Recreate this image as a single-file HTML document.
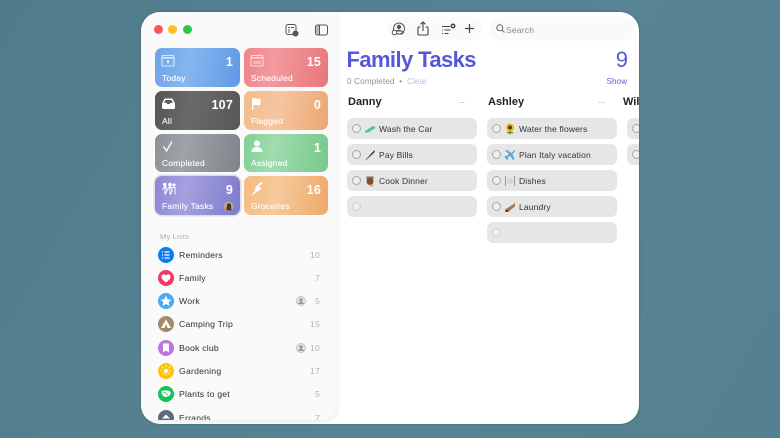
<!DOCTYPE html>
<html><head><meta charset="utf-8">
<style>
*{margin:0;padding:0;box-sizing:border-box}
html,body{width:780px;height:438px;overflow:hidden;background:#56808f;font-family:"Liberation Sans",sans-serif}
.bg{position:absolute;inset:0;background:linear-gradient(120deg,#4f7b8b,#578394 60%,#54808f)}
.win{position:absolute;left:141px;top:12px;width:498px;height:412px;background:#fff;border-radius:19px;overflow:hidden;box-shadow:0 0 2px rgba(0,0,0,.25);filter:blur(.3px)}
.side{position:absolute;left:0;top:0;width:196px;height:408px;background:#fafafa;border-radius:0 0 14px 0;box-shadow:0 1px 6px rgba(0,0,0,.11);overflow:hidden}
.a{position:absolute}
.t{position:absolute;white-space:nowrap}
.tile{position:absolute;width:85px;height:39px;border-radius:7px;color:#fff;font-weight:bold}
.tile .l{position:absolute;left:7px;bottom:4px;font-size:8.5px;font-weight:normal;letter-spacing:.2px;-webkit-text-stroke:.1px #fff;white-space:nowrap}
.tile .n{position:absolute;right:7px;top:6.5px;font-size:12.5px;letter-spacing:.2px}
.tile svg{position:absolute;left:6px;top:6px}
.row{position:absolute;left:0;width:196px;height:23px}
.dot{position:absolute;left:17px;top:2px;width:16px;height:16px;border-radius:50%}
.dot svg{position:absolute;left:0;top:0}
.row .nm{position:absolute;left:38px;top:4.5px;font-size:8.7px;color:#2e2e2e;letter-spacing:.2px;white-space:nowrap}
.row .c{position:absolute;right:17px;top:4.5px;font-size:8.7px;color:#b4b4b4;letter-spacing:.2px}
.pp{position:absolute;left:155px;top:5px;width:10px;height:10px}
.card{position:absolute;width:130px;height:21px;background:#e6e6e6;border-radius:6px}
.card .r{position:absolute;left:5px;top:6px;width:9px;height:9px;border-radius:50%;border:1px solid #a8a8a8;background:#eee}
.card.e .r{border-color:#cfcfcf}
.card .em{position:absolute;left:17px;top:4.5px;width:12px;height:12px}
.card .tx{position:absolute;left:32px;top:5.5px;font-size:8.5px;color:#333;letter-spacing:.15px;white-space:nowrap}
.hd{position:absolute;font-size:11px;font-weight:bold;color:#222;top:84px;white-space:nowrap}
.dots{position:absolute;top:84px;font-size:8px;color:#888;letter-spacing:.1px}
</style></head>
<body>
<div class="bg"></div>
<div class="win">

<div class="side">
<div class="a" style="left:13px;top:13px;width:9px;height:9px;border-radius:50%;background:#fb5457"></div>
<div class="a" style="left:27px;top:13px;width:9px;height:9px;border-radius:50%;background:#fcc01e"></div>
<div class="a" style="left:42px;top:13px;width:9px;height:9px;border-radius:50%;background:#2fc84f"></div>

<svg class="a" style="left:144px;top:11px" width="14" height="14" viewBox="0 0 14 14" fill="none" stroke="#555" stroke-width="1"><rect x="1" y="1.5" width="10" height="10" rx="2"/><path d="M3 4.5h2M6 4.5h3M3 7h2M3 9h2"/><circle cx="10.5" cy="10.5" r="3" fill="#555" stroke="none"/></svg>
<svg class="a" style="left:174px;top:12px" width="13" height="12" viewBox="0 0 13 12" fill="none" stroke="#555" stroke-width="1"><rect x=".5" y="1" width="12" height="10" rx="2"/><rect x="1" y="1.5" width="3.5" height="9" fill="#bbb" stroke="none"/><path d="M4.5 1v10"/></svg>

<div class="tile" style="left:14px;top:36px;background:linear-gradient(100deg,#6ea4e8,#86b6ef 40%,#5f9ae4)">
<svg width="14" height="13" viewBox="0 0 14 13" fill="none" stroke="#d8e8fa" stroke-width="1.1"><rect x="1" y="1.5" width="12" height="10.5" rx="1"/><path d="M1 3.8h12" stroke-width="1.6"/><rect x="6" y="6" width="2" height="3.5" fill="#d8e8fa" stroke="none"/></svg>
<div class="n">1</div><div class="l">Today</div></div>

<div class="tile" style="left:103px;top:36px;width:84px;background:linear-gradient(100deg,#ef8489,#f29a9e 35%,#e7767b)">
<svg width="14" height="13" viewBox="0 0 14 13" fill="none" stroke="#fad8da" stroke-width="1.1"><rect x="1" y="1.5" width="12" height="10.5" rx="1"/><path d="M1 3.8h12" stroke-width="1.6"/><path d="M4 7v3M6 6.5v3.5M8 7v3M10 6.5v3.5"/></svg>
<div class="n">15</div><div class="l">Scheduled</div></div>

<div class="tile" style="left:14px;top:79px;background:linear-gradient(100deg,#545454,#6a6a6a 40%,#585858)">
<svg width="15" height="13" viewBox="0 0 15 13"><path d="M3.5 1.5h8L14 6.5v4a1.5 1.5 0 0 1-1.5 1.5h-10A1.5 1.5 0 0 1 1 10.500v-4z" fill="#fff"/><path d="M3 5.800 4.500 3h6L12 5.800H9.500L8.800 7H6.200L5.500 5.800z" fill="#5c5c5c"/></svg>
<div class="n">107</div><div class="l">All</div></div>

<div class="tile" style="left:103px;top:79px;width:84px;background:linear-gradient(100deg,#f3bb8c,#f5c69f 40%,#eca673)">
<svg width="13" height="14" viewBox="0 0 13 14" fill="#fff"><rect x="2" y="1" width="1.300" height="12"/><path d="M3 1.500c2-1 3.500.8 6 .3l1.500-.3v6.500c-2.500 1-4.500-.8-7.500.2z"/></svg>
<div class="n">0</div><div class="l">Flagged</div></div>

<div class="tile" style="left:14px;top:122px;height:38px;background:linear-gradient(100deg,#8d9298,#9ea3a8 35%,#7f848a)">
<svg width="14" height="13" viewBox="0 0 14 13" fill="none" stroke="#fff" stroke-width="1.300"><path d="M2.500 6.500 5.500 11 11 1.500"/></svg>
<div class="l">Completed</div></div>

<div class="tile" style="left:103px;top:122px;width:84px;height:38px;background:linear-gradient(100deg,#83ce94,#a1dcaf 35%,#77c88a)">
<svg width="14" height="13" viewBox="0 0 14 13" fill="#fff"><circle cx="7" cy="3.500" r="3"/><path d="M1.500 12c0-3.500 2.500-5 5.500-5s5.500 1.500 5.500 5z"/></svg>
<div class="n">1</div><div class="l">Assigned</div></div>

<div class="tile" style="left:14px;top:164px;height:39px;background:linear-gradient(100deg,#8b86d6,#a5a1e0 35%,#7e7acc);box-shadow:0 0 0 1.500px #dedee4">
<svg width="16" height="14" viewBox="0 0 16 14" fill="none" stroke="#fff" stroke-width="1"><circle cx="3.800" cy="2.500" r="1.300" fill="#fff"/><circle cx="9" cy="2.500" r="1.300" fill="#fff"/><circle cx="13" cy="3" r="1.100" fill="#fff"/><path d="M1.500 8l2-3.500h1L6.500 8 4 12.500M4 5v7.500M6.500 8l2-3.500h1l2 3.500-2 4.500M9 5v7.500M11 5.500h3v7"/></svg>
<div class="n">9</div><div class="l">Family Tasks</div>
<svg style="left:68px;top:25px" width="11" height="11" viewBox="0 0 11 11"><circle cx="5.500" cy="5.500" r="5" fill="#b7a89a"/><path d="M3.500 9.500 4 3.500 6 2l2 1.500.5 6z" fill="#4d3526"/><path d="M1.500 8l2-1.500.5 3z" fill="#c9762d"/></svg></div>

<div class="tile" style="left:103px;top:164px;width:84px;height:39px;background:linear-gradient(100deg,#f5bb83,#f6c99b 40%,#eea868)">
<svg width="14" height="14" viewBox="0 0 14 14" fill="#fff"><path d="M13 1c-1-.8-3-.5-4 .8L6 4.800c-.9 1-.8 2.200-.5 3.200L2 12.500 2.700 13 7 9.200c1 .2 2-.1 2.800-.9l2-2.800-2 .5.300-1.500-1.300.3.300-1.300 1.500-.2z"/></svg>
<div class="n">16</div><div class="l">Groceries</div></div>

<div class="t" style="left:19px;top:220px;font-size:7.5px;color:#adadad;letter-spacing:.2px">My Lists</div>

<div class="row" style="top:233px"><div class="dot" style="background:#0a7df2"><svg width="16" height="16" viewBox="0 0 16 16" stroke="#fff" stroke-width="1.200" fill="none"><path d="M6.500 5h5M6.500 8h5M6.500 11h5M4 5h1M4 8h1M4 11h1"/></svg></div><div class="nm">Reminders</div><div class="c">10</div></div>

<div class="row" style="top:256px"><div class="dot" style="background:#f03a63"><svg width="16" height="16" viewBox="0 0 16 16" fill="#fff"><path d="M8 12.500C4.500 10 3.500 8.500 3.500 6.800 3.500 5.200 4.700 4.300 5.800 4.300c1 0 1.700.5 2.200 1.300.5-.8 1.200-1.300 2.200-1.300 1.100 0 2.300.9 2.300 2.500 0 1.700-1 3.200-4.500 5.700z"/></svg></div><div class="nm">Family</div><div class="c">7</div></div>

<div class="row" style="top:279px"><div class="dot" style="background:#4aa8f5"><svg width="16" height="16" viewBox="0 0 16 16" fill="#fff"><path d="M8 2.800 9.600 6.300l3.800.4-2.800 2.500.8 3.800L8 11l-3.400 2 .8-3.800L2.600 6.700l3.800-.4z"/></svg></div><div class="nm">Work</div><div class="c">5</div>
<svg class="pp" viewBox="0 0 10 10"><circle cx="5" cy="5" r="4.500" fill="#e4e4e4" stroke="#b5b5b5" stroke-width=".7"/><circle cx="5" cy="3.900" r="1.700" fill="#999"/><path d="M2.200 8c.3-1.700 1.500-2.200 2.800-2.200S7.500 6.300 7.800 8z" fill="#999"/></svg></div>

<div class="row" style="top:302px"><div class="dot" style="background:#a58a68"><svg width="16" height="16" viewBox="0 0 16 16" fill="#fff"><path d="M8 3.500 13 12H3z"/><path d="M8 8 6.500 12h3z" fill="#a58a68"/></svg></div><div class="nm">Camping Trip</div><div class="c">15</div></div>

<div class="row" style="top:326px"><div class="dot" style="background:#bd74dd"><svg width="16" height="16" viewBox="0 0 16 16" fill="#fff"><path d="M5 3.500h6v9L8 10.500l-3 2z"/></svg></div><div class="nm">Book club</div><div class="c">10</div>
<svg class="pp" viewBox="0 0 10 10"><circle cx="5" cy="5" r="4.500" fill="#e4e4e4" stroke="#b5b5b5" stroke-width=".7"/><circle cx="5" cy="3.900" r="1.700" fill="#999"/><path d="M2.200 8c.3-1.700 1.500-2.200 2.800-2.200S7.500 6.300 7.800 8z" fill="#999"/></svg></div>

<div class="row" style="top:349px"><div class="dot" style="background:#fdc30a"><svg width="16" height="16" viewBox="0 0 16 16" fill="#fff" stroke="#fff"><circle cx="8" cy="8" r="2" stroke="none"/><path stroke-width="1" stroke-dasharray="1.500 1" d="M8 2.500v2.500M8 11v2.500M2.500 8H5M11 8h2.500M4 4l2 2M10 10l2 2M12 4l-2 2M6 10l-2 2"/></svg></div><div class="nm">Gardening</div><div class="c">17</div></div>

<div class="row" style="top:372px"><div class="dot" style="background:#14c458"><svg width="16" height="16" viewBox="0 0 16 16" fill="#fff"><path d="M3.500 5c4-1.200 8-.5 9.500 1.500-.8 3.500-4 5-6.500 4.300C4.500 10.200 3.500 7.500 3.500 5z"/><path d="M5 6c2 .3 3.500 1.500 5 3.500" stroke="#14c458" stroke-width=".7" fill="none"/></svg></div><div class="nm">Plants to get</div><div class="c">5</div></div>

<div class="row" style="top:396px"><div class="dot" style="background:#5b6b7c"><svg width="16" height="16" viewBox="0 0 16 16" fill="#fff"><path d="M8 4.500 12 8.500H4z"/></svg></div><div class="nm">Errands</div><div class="c">7</div></div>
</div>

<div class="a" style="left:247px;top:5px;width:95px;height:24px;border-radius:12px;background:#fafafa"></div>
<svg class="a" style="left:250px;top:10px" width="15" height="15" viewBox="0 0 15 15" fill="none" stroke="#555" stroke-width="1"><circle cx="8" cy="6.500" r="5.500"/><circle cx="8" cy="5" r="1.700" fill="#555"/><path d="M5 9.500c.5-1.500 5.500-1.500 6 0" fill="#555"/><circle cx="3.500" cy="10.500" r="2.300" fill="#fafafa"/><path d="M7 12h4l1.500-1.500L11 9" /></svg>
<svg class="a" style="left:276px;top:9px" width="12" height="15" viewBox="0 0 12 15" fill="none" stroke="#444" stroke-width="1.100"><path d="M3.500 6H2a1 1 0 0 0-1 1v6a1 1 0 0 0 1 1h8a1 1 0 0 0 1-1V7a1 1 0 0 0-1-1H8.500M6 10V1M3.500 3.300 6 1l2.500 2.300"/></svg>
<svg class="a" style="left:300px;top:11px" width="15" height="12" viewBox="0 0 15 12" fill="none" stroke="#444" stroke-width="1.100"><path d="M1 3.500h8M1 7h1M3.500 7h6M1 10.500h1M3.500 10.500h4"/><circle cx="12" cy="3" r="1.700" stroke-width="1.500"/></svg>
<svg class="a" style="left:323px;top:11px" width="11" height="11" viewBox="0 0 11 11" stroke="#444" stroke-width="1.200"><path d="M5.500 1v9M1 5.500h9"/></svg>

<div class="a" style="left:348px;top:5px;width:146px;height:24px;border-radius:12px;background:#fafafa"></div>
<svg class="a" style="left:355px;top:12px" width="9" height="9" viewBox="0 0 9 9" fill="none" stroke="#666" stroke-width="1"><circle cx="3.800" cy="3.800" r="3"/><path d="M6 6l2.500 2.500"/></svg>
<div class="t" style="left:365px;top:13px;font-size:8.500px;color:#888;letter-spacing:.2px">Search</div>

<div class="t" style="left:205.500px;top:35px;font-size:22px;font-weight:bold;color:#5558d9;letter-spacing:-.6px">Family Tasks</div>
<div class="t" style="right:11px;top:35px;font-size:22px;color:#5558d9">9</div>
<div class="t" style="left:206px;top:65px;font-size:8.200px;color:#8f8f8f;letter-spacing:.1px">0 Completed &nbsp;•&nbsp; <span style="color:#b9b8f0">Clear</span></div>
<div class="t" style="right:12px;top:65px;font-size:8.200px;color:#5f62dc">Show</div>

<div class="hd" style="left:207px">Danny</div><div class="dots" style="left:317px">...</div>
<div class="hd" style="left:347px">Ashley</div><div class="dots" style="left:457px">...</div>
<div class="hd" style="left:482px">Wil</div>

<div class="card" style="left:206px;top:106px"><div class="r"></div><svg class="em" viewBox="0 0 12 12"><path d="M1 8 8 3.500c1.500-.8 3-.3 3.200.5.200 1-.5 1.500-1.500 2.200L4 9.500C2.500 10 .5 9 1 8z" fill="#4fc596"/></svg><div class="tx">Wash the Car</div></div>
<div class="card" style="left:206px;top:132px"><div class="r"></div><svg class="em" viewBox="0 0 12 12"><path d="M1 11.500 10 1.500l1 .3-1 2L2 11z" fill="#2b2b2b"/></svg><div class="tx">Pay Bills</div></div>
<div class="card" style="left:206px;top:158px"><div class="r"></div><svg class="em" viewBox="0 0 12 12"><rect x="2.500" y="1.500" width="7" height="3" fill="#8a6a58"/><circle cx="6" cy="6.500" r="3.500" fill="#7b5140"/><path d="M5 10l3-1 2 2-3 .5z" fill="#e69a4a"/></svg><div class="tx">Cook Dinner</div></div>
<div class="card e" style="left:206px;top:184px"><div class="r"></div></div>

<div class="card" style="left:346px;top:106px"><div class="r"></div><svg class="em" viewBox="0 0 12 12"><circle cx="6" cy="4.500" r="4" fill="#f2b80e"/><circle cx="6" cy="4.500" r="2" fill="#5d3a12"/><path d="M6 8v3.500M3 10c1.500-1 2.500-.5 3 .5 .5-1 1.500-1.500 3-.5" stroke="#4c8a2a" stroke-width="1.200" fill="none"/></svg><div class="tx">Water the flowers</div></div>
<div class="card" style="left:346px;top:132px"><div class="r"></div><svg class="em" viewBox="0 0 12 12" fill="#56a9de"><path d="M1 1.500 3 1l4.500 3L10 1.500c.8-.6 1.600 0 1 1L8.500 5l2 5-1.500 1-3-4.500L4 8.500v2L3 11 1.500 9 .3 7.800l1-.8h1.500L5 5z"/></svg><div class="tx">Plan Italy vacation</div></div>
<div class="card" style="left:346px;top:158px"><div class="r"></div><svg class="em" viewBox="0 0 12 12"><circle cx="6" cy="6" r="3" fill="#d5d5d5"/><path d="M1.500 1v10M10.500 1v10" stroke="#9a9a9a" stroke-width="1"/></svg><div class="tx">Dishes</div></div>
<div class="card" style="left:346px;top:184px"><div class="r"></div><svg class="em" viewBox="0 0 12 12"><path d="M1 8.500 9 3.500l2-2v4L4 11H1.500z" fill="#a67c55"/><path d="M1 9h4l-1 2H1.500z" fill="#5c4636"/></svg><div class="tx">Laundry</div></div>
<div class="card e" style="left:346px;top:210px"><div class="r"></div></div>

<div class="card" style="left:486px;top:106px"><div class="r"></div></div>
<div class="card" style="left:486px;top:132px"><div class="r"></div></div>
</div>
</body></html>
